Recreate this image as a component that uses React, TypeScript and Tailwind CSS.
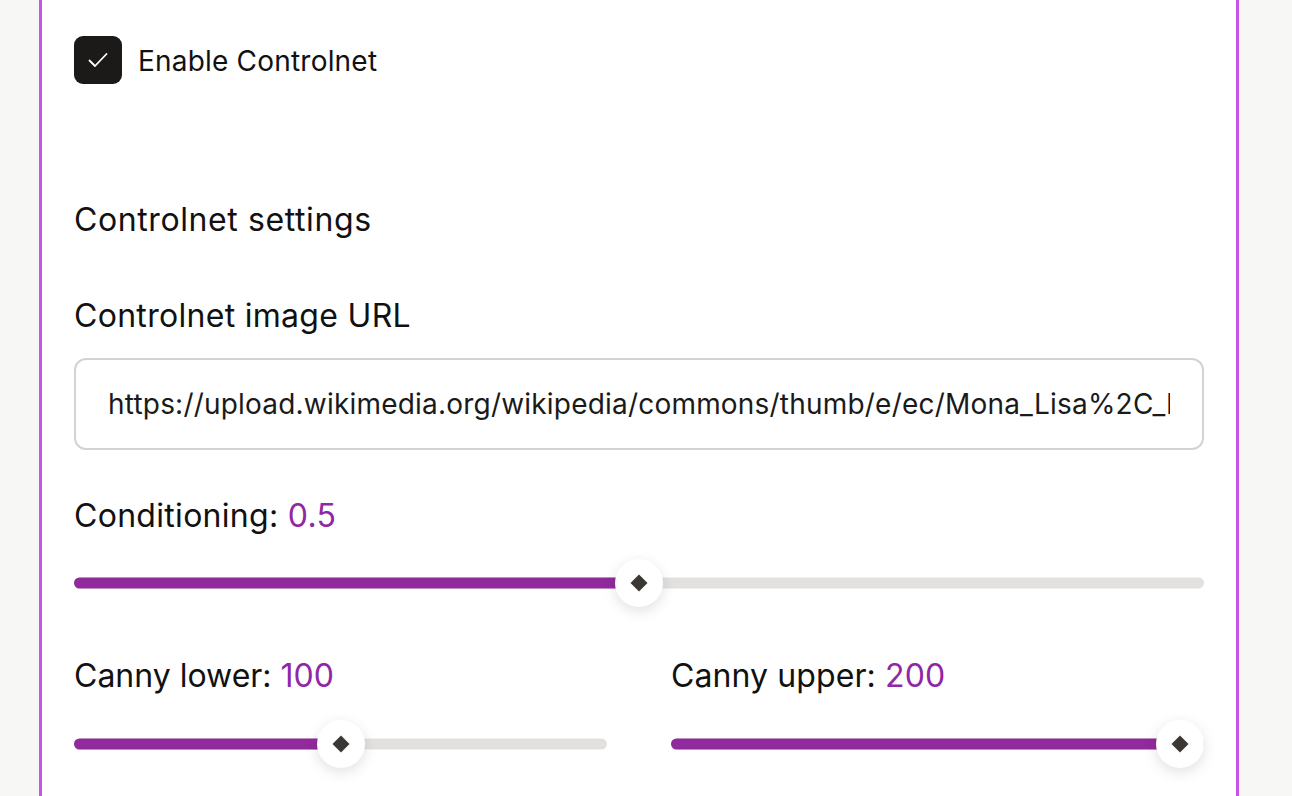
import React from "react";

const font = { fontFamily: "Inter, 'Noto Sans', sans-serif" };

function Slider({ pct }: { pct: number }) {
  return (
    <div className="relative h-12 w-full">
      <div className="absolute left-0 right-0 top-1/2 h-[11px] -translate-y-1/2 rounded-full bg-[#e3e1df]" />
      <div
        className="absolute left-0 top-1/2 h-[11px] -translate-y-1/2 rounded-full bg-[#912a9c]"
        style={{ width: `calc(${pct}% )` }}
      />
      <div
        className="absolute top-0 flex h-12 w-12 -translate-x-1/2 items-center justify-center rounded-full bg-white shadow-[0_4px_14px_rgba(0,0,0,0.12)]"
        style={{ left: `calc(24px + (100% - 48px) * ${pct / 100})` }}
      >
        <div className="h-[12px] w-[12px] rotate-45 bg-[#3a3734]" />
      </div>
    </div>
  );
}

export default function App() {
  return (
    <div className="flex h-[796px] w-[1292px] overflow-hidden bg-[#f7f7f5]" style={font}>
      <div className="ml-[39px] w-[1200px] border-x-[3px] border-[#c952e9] bg-white px-8 pt-9 text-[#111]">
        <label className="flex items-center gap-4">
          <span className="flex h-12 w-12 items-center justify-center rounded-[9px] bg-[#1b1a19]">
            <svg width="24" height="24" viewBox="0 0 24 24" fill="none" stroke="white" strokeWidth="1.8" strokeLinecap="round" strokeLinejoin="round">
              <path d="M3.5 12.5l5.5 5.5L20.5 6" />
            </svg>
          </span>
          <span className="mt-[2px] text-[28px] leading-none tracking-[0.2px]">Enable Controlnet</span>
        </label>

        <div className="mt-[118px] text-[32px] leading-[36px] tracking-[0.6px]">Controlnet settings</div>

        <div className="mt-[60px] text-[32px] leading-[36px] tracking-[0.3px]">Controlnet image URL</div>

        <div className="mt-6 flex h-[92px] items-center overflow-hidden rounded-xl border-2 border-[#d6d2cf] pl-[32px] pr-[32px]">
          <div className="overflow-hidden whitespace-nowrap text-[28px] tracking-[0.2px] text-[#1a1a1a]">
            https://upload.wikimedia.org/wikipedia/commons/thumb/e/ec/Mona_Lisa%2C_by_Leonardo_da_Vinci.jpg
          </div>
        </div>

        <div className="mt-12 text-[32px] leading-[36px] tracking-[0.3px]">
          Conditioning: <span className="text-[#8f27a6]">0.5</span>
        </div>
        <div className="mt-[25px]">
          <Slider pct={50} />
        </div>

        <div className="mt-[51px] grid grid-cols-2 gap-16">
          <div>
            <div className="text-[32px] leading-[36px] tracking-[0px]">
              Canny lower: <span className="text-[#8f27a6]">100</span>
            </div>
            <div className="mt-[26px]">
              <Slider pct={50} />
            </div>
          </div>
          <div>
            <div className="text-[32px] leading-[36px] tracking-[0.1px]">
              Canny upper: <span className="text-[#8f27a6]">200</span>
            </div>
            <div className="mt-[26px]">
              <Slider pct={100} />
            </div>
          </div>
        </div>
      </div>
    </div>
  );
}
